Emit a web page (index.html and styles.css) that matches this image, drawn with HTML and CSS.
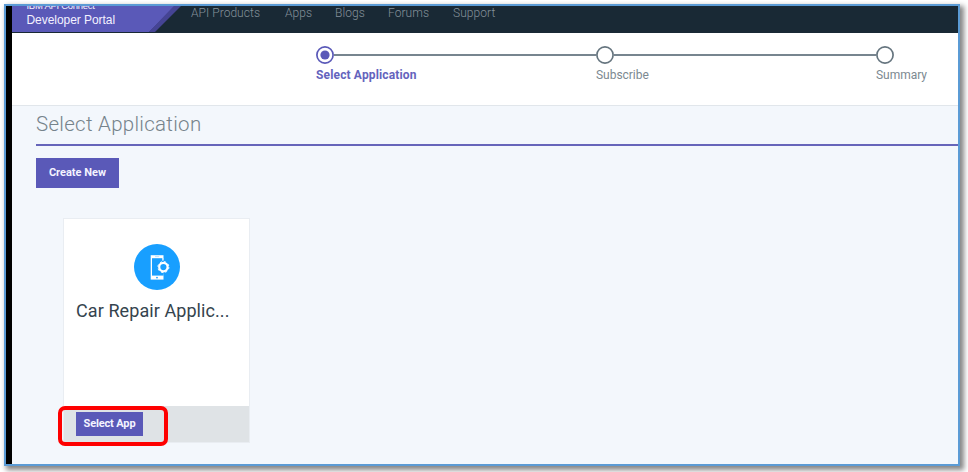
FILE: index.html
```html
<!DOCTYPE html>
<html lang="en">
<head>
<meta charset="utf-8">
<title>Select Application</title>
<link rel="stylesheet" href="styles.css">
</head>
<body>
<div class="frame">
  <div class="portal">
    <header class="topbar">
      <div class="brand"><span class="brand-top">IBM API Connect</span><span class="brand-name">Developer Portal</span></div>
      <nav class="nav"><a class="products">API Products</a><a class="apps">Apps</a><a class="blogs">Blogs</a><a class="forums">Forums</a><a class="support">Support</a></nav>
    </header>
    <section class="progress">
      <div class="step current">
        <div class="track"><svg class="dot" viewBox="0 0 18 18"><circle cx="9" cy="9" r="8.1"/><circle class="fill" cx="9" cy="9" r="4.6"/></svg></div>
        <span class="label">Select Application</span>
      </div>
      <div class="step">
        <div class="track"><svg class="dot" viewBox="0 0 18 18"><circle cx="9" cy="9" r="8.1"/></svg></div>
        <span class="label">Subscribe</span>
      </div>
      <div class="step last">
        <div class="track"><svg class="dot" viewBox="0 0 18 18"><circle cx="9" cy="9" r="8.1"/></svg></div>
        <span class="label">Summary</span>
      </div>
    </section>
    <main class="content">
      <h1><span>Select Application</span></h1>
      <button class="create"><span>Create New</span></button>
      <article class="card">
        <div class="card-body">
          <svg class="app-icon" viewBox="0 0 46 46">
            <circle cx="23" cy="23" r="23" fill="#189fff"/>
            <path d="M16.7 11.2h12.8v24.4H16.7z" fill="#fff"/>
            <path d="M18 14.2h11.6v17.4H18z" fill="#189fff"/>
            <path d="M28.3 14h1.2v3h-1.2z" fill="#fff"/>
            <path d="M21 12.6h4.2" stroke="#9ed7ff" stroke-width=".7"/>
            <circle cx="23" cy="33.6" r=".9" fill="#189fff"/>
            <circle cx="29.4" cy="23.1" r="6.5" fill="#189fff"/>
            <circle cx="29.4" cy="23.1" r="4.2" fill="none" stroke="#fff" stroke-width="2.2"/>
            <circle cx="29.4" cy="23.1" r="5.5" fill="none" stroke="#fff" stroke-width="1" stroke-dasharray="2.16 2.16"/>
          </svg>
          <h2><span>Car Repair Applic...</span></h2>
        </div>
        <div class="card-actions"><button class="select"><span>Select App</span></button><div class="highlight"></div></div>
      </article>
    </main>
  </div>
</div>
</body>
</html>
```
FILE: styles.css
```css
* { box-sizing: border-box; }
body { margin: 0; background: #fff; height: 472px; overflow: hidden; padding: 4px; font-family: Roboto, "Liberation Sans", sans-serif; }
.frame { width: 956px; height: 462px; border: 2px solid #5b9bd5; background: #000; padding-left: 6px; box-shadow: 3px 3px 5px 1px rgba(0,0,0,.48); }
.portal { height: 458px; overflow: hidden; background: #f3f7fc; display: flex; flex-direction: column; }
.topbar { flex: none; height: 27px; background: #192935; display: flex; overflow: hidden; }
.brand { width: 169px; height: 26px; flex: none; padding-left: 14.5px; color: #f3f1ff; font-family: "Liberation Sans", sans-serif; background: linear-gradient(134.3deg, #5a59b8 calc(100% - 23.5px), #454494 calc(100% - 23px)); clip-path: polygon(0 0, 100% 0, 143px 100%, 0 100%); display: flex; flex-direction: column; }
.brand-top { font-size: 9.5px; line-height: 10px; margin-top: -5px; height: 8px; white-space: nowrap; letter-spacing: -.28px; }
.brand-name { font-size: 12px; line-height: 14px; margin-top: 4px; white-space: nowrap; letter-spacing: -.05px; }
.nav { display: flex; color: #84919a; font-size: 12px; line-height: 14px; padding-left: 10px; font-weight: 300; }
.nav a { white-space: nowrap; letter-spacing: .05px; }
.products { width: 94px; }
.apps { width: 50px; }
.blogs { width: 53px; }
.forums { width: 65px; }
.progress { flex: none; height: 73px; background: #fff; border-bottom: 1px solid #e1e6eb; padding: 13px 0 0 304px; display: flex; }
.step { width: 280px; flex: none; color: #7c8991; }
.track { height: 18px; display: flex; align-items: center; }
.track::after { content: ""; flex: 1; height: 2px; margin-top: -1px; background: #77858f; }
.last .track::after { display: none; }
.dot { width: 18px; height: 18px; flex: none; fill: #fff; stroke: #66757f; stroke-width: 1.7; }
.current .dot { stroke: #5a59b8; }
.dot .fill { fill: #5a59b8; stroke: none; }
.label { display: block; font-size: 12px; line-height: 14px; margin-top: 4px; letter-spacing: -.03px; }
.current .label { color: #6463bd; font-weight: 700; letter-spacing: .15px; }
.content { padding-left: 24px; flex: 1; }
h1 { margin: 0; height: 40px; border-bottom: 2px solid #6665ba; padding-top: 6px; font-size: 20.5px; line-height: 24px; color: #76838b; font-weight: 300; letter-spacing: .28px; }
button { display: block; border: 0; margin: 0; padding: 0; border-radius: 0; background: #5a59b8; color: #f4f3ff; font: 700 11px/14px Roboto, sans-serif; white-space: nowrap; }
.create { width: 83px; height: 30px; margin-top: 12px; }
.select { width: 67px; height: 24px; letter-spacing: -.15px; }
.card { width: 187px; height: 225px; margin: 30px 0 0 27px; background: #fff; border: 1px solid #e9edf2; }
.card-body { height: 187px; padding-top: 26px; }
.app-icon { display: block; width: 46px; height: 46px; margin: -1px auto 0; }
h2 { margin: 9px 0 0 12px; font-size: 18px; line-height: 24px; font-weight: 400; color: #35444e; white-space: nowrap; letter-spacing: .08px; }
.card-actions { position: relative; height: 36px; background: #dfe3e6; padding: 6px 0 0 12px; }
.highlight { position: absolute; left: -6px; top: 0; width: 110px; height: 40px; border: 4px solid #fe0000; border-radius: 7px; }
```
